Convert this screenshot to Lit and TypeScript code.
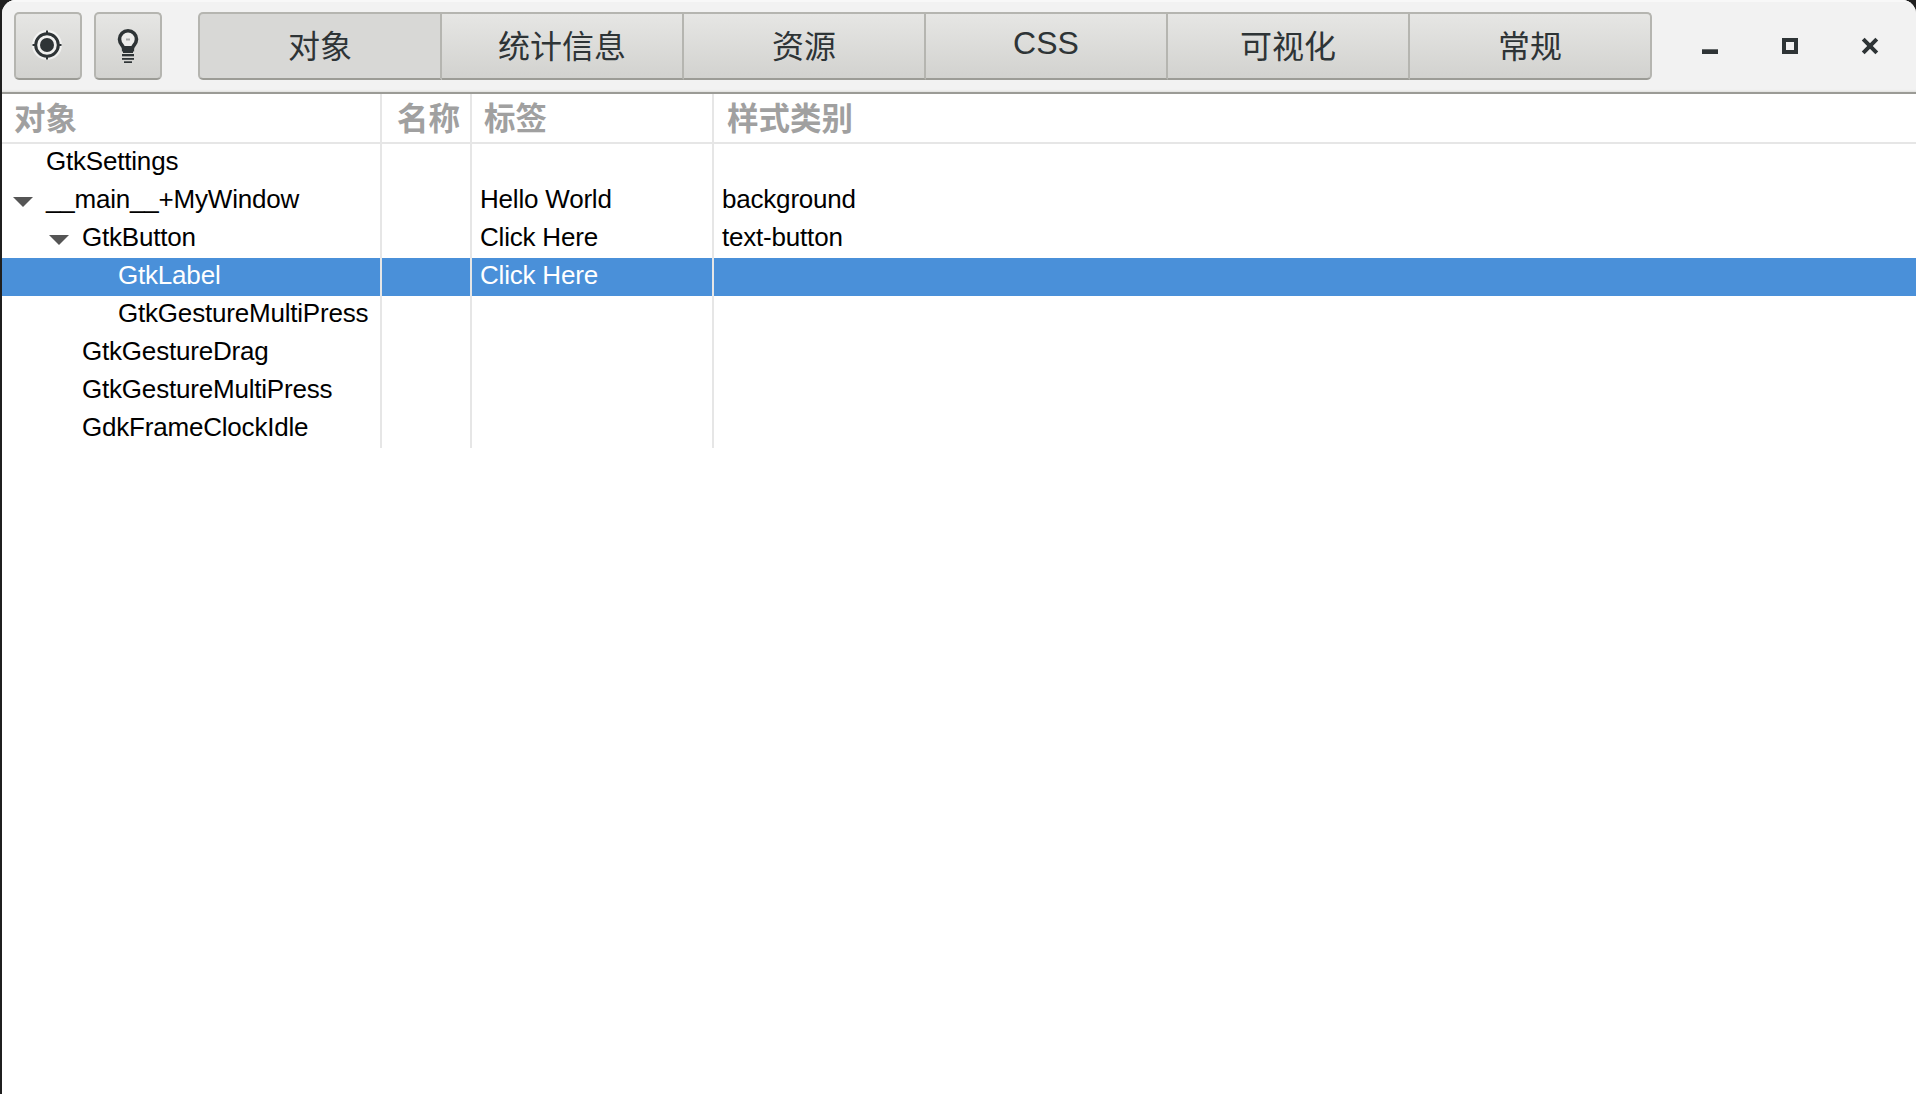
import { LitElement, html, css, svg } from "lit";
import { customElement } from "lit/decorators.js";

type Row = { name: string; depth: number; open?: boolean; label?: string; style?: string; sel?: boolean };
const rows: Row[] = [
  { name: "GtkSettings", depth: 0 },
  { name: "__main__+MyWindow", depth: 0, open: true, label: "Hello World", style: "background" },
  { name: "GtkButton", depth: 1, open: true, label: "Click Here", style: "text-button" },
  { name: "GtkLabel", depth: 2, label: "Click Here", sel: true },
  { name: "GtkGestureMultiPress", depth: 2 },
  { name: "GtkGestureDrag", depth: 1 },
  { name: "GtkGestureMultiPress", depth: 1 },
  { name: "GdkFrameClockIdle", depth: 1 },
];
const tabs = ["对象", "统计信息", "资源", "CSS", "可视化", "常规"];

const targetIcon = svg`<svg class="target" width="32" height="32" viewBox="0 0 32 32">
  <circle cx="16" cy="16" r="15" fill="#fff" opacity=".6"/>
  <circle cx="16" cy="16" r="11.300" fill="none" stroke="#2e3436" stroke-width="3"/>
  <circle cx="16" cy="16" r="7" fill="#2e3436"/>
  <path d="M16 1.500v3M16 27.500v3M1.500 16h3M27.500 16h3" stroke="#2e3436" stroke-width="2"/>
</svg>`;
const bulbIcon = svg`<svg width="22" height="34" viewBox="0 0 22 34">
  <path d="M11 1.800a8.500 8.500 0 0 0-8.500 8.500c0 3.400 2 5.200 3.200 7 .8 1.200 1 2.400 1 3.400h8.600c0-1 .2-2.200 1-3.400 1.200-1.800 3.200-3.600 3.200-7A8.500 8.500 0 0 0 11 1.800z" fill="#ededeb" stroke="#2e3436" stroke-width="3.600"/>
  <rect x="6" y="17" width="10" height="7" fill="#2e3436"/>
  <rect x="9" y="9.500" width="4" height="2" fill="#a5a7a7"/>
  <rect x="5" y="25" width="12" height="2.300" fill="#2e3436"/>
  <rect x="5" y="29" width="12" height="1.800" fill="#2e3436"/>
  <rect x="7" y="32.300" width="8" height="1.700" fill="#2e3436"/>
</svg>`;

@customElement("app-root")
export class AppRoot extends LitElement {
  static styles = css`
    :host { display: block; width: 1916px; height: 1094px; background: #1f1f1f; overflow: hidden;
      font-family: "Liberation Sans", "Noto Sans CJK SC", sans-serif; }
    .window { margin-left: 2px; height: 1094px; background: #fff; border-radius: 14px 14px 0 0; overflow: hidden; display: flex; flex-direction: column; }
    .bar { box-sizing: border-box; height: 94px; flex: none; display: flex; align-items: flex-start; padding: 10px 0 0 12px;
      background: #f2f2f2; border-top: 2px solid #f8f8f8; border-bottom: 2px solid #9b9b96; box-shadow: inset 0 -3px 2px -2px #e0e0dd; }
    .icon-btn { flex: none; box-sizing: border-box; width: 68px; height: 68px; margin-right: 12px; display: flex; align-items: center; justify-content: center;
      border: 2px solid #b5b5b0; border-bottom-color: #9c9c96; border-radius: 5px; background: linear-gradient(#e6e6e4, #d2d2cf); }
    .target { margin: -2px 2px 0 0; }
    .tabs { display: flex; flex: none; margin-left: 24px; }
    .tab { flex: none; box-sizing: border-box; width: 242px; height: 68px; display: flex; align-items: center; justify-content: center; padding-bottom: 4px;
      border: 2px solid #b5b5b0; border-left: none; border-bottom-color: #9c9c96; background: linear-gradient(#e6e6e4, #d2d2cf);
      color: #2e3436; font-size: 32px; font-family: "Noto Sans CJK SC", sans-serif; }
    .tab:first-child { width: 244px; border-left: 2px solid #b5b5b0; border-radius: 5px 0 0 5px; background: #d8d8d6; }
    .tab:last-child { border-radius: 0 5px 5px 0; }
    .tab.latin { font-family: "Liberation Sans", sans-serif; padding-bottom: 5px; }
    .wm { display: flex; flex: none; margin-left: 18px; margin-top: 20px; }
    .wm span { width: 80px; height: 28px; display: flex; align-items: center; justify-content: center; }
    .table { display: grid; grid-template-columns: 380px 90px 242px 1fr; }
    .hcell { box-sizing: border-box; height: 50px; border-bottom: 2px solid #e6e6e6; border-right: 2px solid #e6e6e6; color: #a0a0a0;
      font: bold 31.500px "Noto Sans CJK SC", sans-serif; display: flex; align-items: center; padding-bottom: 4px; }
    .hcell.end { border-right: none; }
    .cell { box-sizing: border-box; height: 38px; border-right: 2px solid #e6e6e6; color: #000; font-size: 26px; line-height: 34px; padding-bottom: 4px;
      display: flex; align-items: center; white-space: nowrap; letter-spacing: -0.2px; }
    .cell.last { border-right: none; }
    .cell.sel { background: #4a90d9; color: #fff; }
    .cell.text { padding-left: 8px; }
    .arrow { flex: none; width: 20px; height: 10px; margin: 5px 13px 0 3px; }
    .spacer { flex: none; width: 36px; }
    .indent { flex: none; }
  `;

  render() {
    return html`<div class="window">
      <div class="bar">
        <div class="icon-btn">${targetIcon}</div>
        <div class="icon-btn">${bulbIcon}</div>
        <div class="tabs">
          ${tabs.map((t) => html`<div class="tab ${t === "CSS" ? "latin" : ""}">${t}</div>`)}
        </div>
        <div class="wm">
          <span><svg width="18" height="28" viewBox="0 0 18 28"><rect x="1" y="17.300" width="16" height="4.700" fill="#2e3436"/></svg></span>
          <span><svg width="16" height="16" viewBox="0 0 16 16"><path d="M2 2h12v12H2z" fill="none" stroke="#2e3436" stroke-width="4"/></svg></span>
          <span><svg width="20" height="20" viewBox="0 0 20 20"><path d="M3.200 3.200l13.600 13.600M16.800 3.200l-13.600 13.600" fill="none" stroke="#2e3436" stroke-width="4"/></svg></span>
        </div>
      </div>
      <div class="table">
        <div class="hcell" style="padding-left:12px">对象</div>
        <div class="hcell" style="padding-left:15px">名称</div>
        <div class="hcell" style="padding-left:12px">标签</div>
        <div class="hcell end" style="padding-left:13px">样式类别</div>
        ${rows.map((r) => {
          const s = r.sel ? "sel" : "";
          return html`
            <div class="cell ${s}">
              <span class="indent" style="width:${8 + r.depth * 36}px"></span>
              ${r.open
                ? html`<svg class="arrow" viewBox="0 0 20 10"><path d="M0 0h20L10 10z" fill="#555"/></svg>`
                : html`<span class="spacer"></span>`}
              ${r.name}
            </div>
            <div class="cell ${s}"></div>
            <div class="cell text ${s}">${r.label ?? ""}</div>
            <div class="cell text last ${s}">${r.style ?? ""}</div>`;
        })}
      </div>
    </div>`;
  }
}
